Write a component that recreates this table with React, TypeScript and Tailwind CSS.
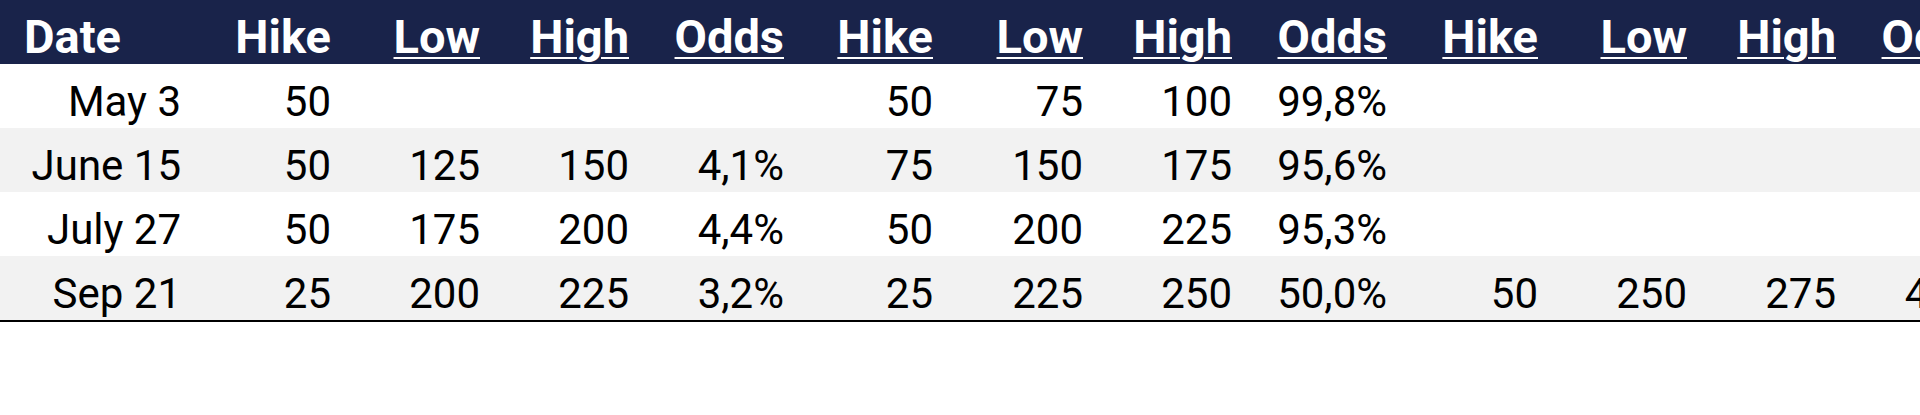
const cols = [
  { label: "Hike", w: "w-[151px]", u: false },
  { label: "Low", w: "w-[149px]", u: true },
  { label: "High", w: "w-[149px]", u: true },
  { label: "Odds", w: "w-[155px]", u: true },
  { label: "Hike", w: "w-[149px]", u: true },
  { label: "Low", w: "w-[150px]", u: true },
  { label: "High", w: "w-[149px]", u: true },
  { label: "Odds", w: "w-[155px]", u: true },
  { label: "Hike", w: "w-[151px]", u: true },
  { label: "Low", w: "w-[149px]", u: true },
  { label: "High", w: "w-[149px]", u: true },
  { label: "Odds", w: "w-[155px]", u: true },
];

const rows = [
  { date: "May 3", cells: ["50", "", "", "", "50", "75", "100", "99,8%", "", "", "", ""] },
  { date: "June 15", cells: ["50", "125", "150", "4,1%", "75", "150", "175", "95,6%", "", "", "", ""] },
  { date: "July 27", cells: ["50", "175", "200", "4,4%", "50", "200", "225", "95,3%", "", "", "", ""] },
  { date: "Sep 21", cells: ["25", "200", "225", "3,2%", "25", "225", "250", "50,0%", "50", "250", "275", "4,3%"] },
];

export default function App() {
  return (
    <div className="w-[1920px] h-[415px] bg-white overflow-hidden font-['Roboto',sans-serif] text-black">
      <div className="w-max border-b-2 border-black">
        {/* Header */}
        <div className="flex h-16 bg-[#19234a] text-white font-bold text-[47px] leading-none">
          <div className="w-[184px] shrink-0 flex items-end pl-[24px] pb-[4px]">Date</div>
          {cols.map((c, i) => (
            <div key={i} className={`${c.w} shrink-0 flex items-end justify-end pr-[4px] pb-[4px]`}>
              <span className={c.u ? "underline decoration-2 underline-offset-[4px]" : ""}>{c.label}</span>
            </div>
          ))}
        </div>

        {/* Rows */}
        {rows.map((r, ri) => (
          <div
            key={r.date}
            className={`flex h-16 text-[42px] leading-none ${ri % 2 === 1 ? "bg-[#f2f2f2]" : "bg-white"}`}
          >
            <div className="w-[184px] shrink-0 flex items-end justify-end pr-[3px] pb-[5px]">{r.date}</div>
            {r.cells.map((v, ci) => (
              <div key={ci} className={`${cols[ci].w} shrink-0 flex items-end justify-end pr-[4px] pb-[5px]`}>
                {v}
              </div>
            ))}
          </div>
        ))}
      </div>
    </div>
  );
}
